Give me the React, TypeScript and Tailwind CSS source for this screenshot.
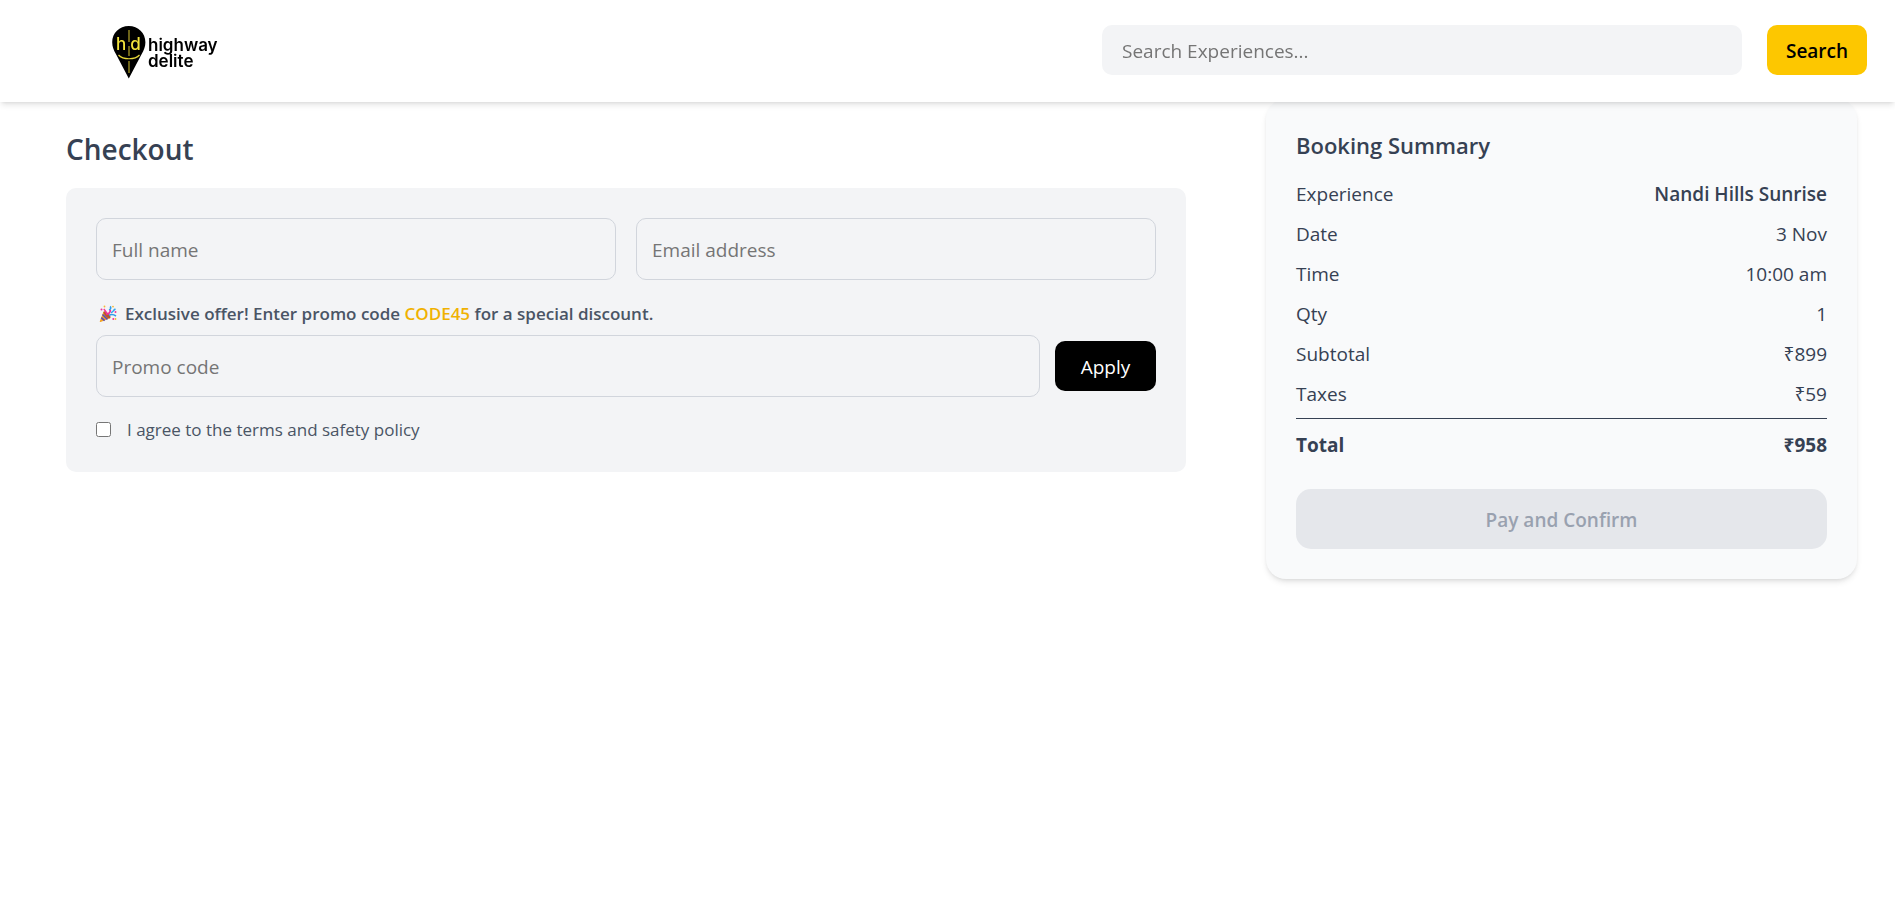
import { useState } from "react";

const rows = [
  { label: "Experience", value: "Nandi Hills Sunrise", strong: true },
  { label: "Date", value: "3 Nov" },
  { label: "Time", value: "10:00 am" },
  { label: "Qty", value: "1" },
  { label: "Subtotal", value: "₹899" },
  { label: "Taxes", value: "₹59" },
];

function Logo() {
  return (
    <a href="#" className="flex items-start gap-[2px] pt-1 text-black">
      <svg width="34" height="53" viewBox="0 0 34 53" aria-hidden="true">
        <path
          d="M16.8 0C7.4 0 .2 7.2.2 16.2c0 4.4 1.5 7.8 3.7 11.8L16.8 52.5 29.7 28c2.2-4 3.7-7.4 3.7-11.8C33.4 7.2 26.2 0 16.8 0Z"
          fill="#000"
        />
        <path d="M17 4V16M17 20V30M17 35V47" stroke="#b5a52a" strokeWidth="1.2" fill="none" />
        <path d="M6.5 29C11 34 23 34 27.5 29" stroke="#e5d638" strokeWidth="1.2" fill="none" />
        <text x="4" y="24" fill="#f2e33c" fontFamily="Inter, sans-serif" fontSize="17" fontWeight="500">
          h<tspan dx="4">d</tspan>
        </text>
      </svg>
      <span className="block pt-[11px] font-['Inter',sans-serif] text-[17px] leading-4 font-semibold">
        highway
        <br />
        delite
      </span>
    </a>
  );
}

function PartyPopper() {
  return (
    <svg width="18" height="18" viewBox="0 0 18 18" className="shrink-0" aria-hidden="true">
      <path d="M4.5 6.5.8 16.2c-.2.7.3 1.1.9.8L11.5 13Z" fill="#f5a524" />
      <path d="M3.5 9.5 8.5 14.3M2.3 12.7 5.6 15.7" stroke="#5b4bb7" strokeWidth="1.7" />
      <ellipse cx="8" cy="9.8" rx="1.9" ry="4.5" transform="rotate(-45 8 9.8)" fill="#b8552c" />
      <path d="M11 1.5c1.500 1 .5 3-1 3.5M10 10.5c2-1.500 4.500-1.200 7 .5" stroke="#2f9be8" strokeWidth="1.6" fill="none" />
      <path d="M8.5 9.8C7 7.500 6.500 5.500 4.800 4M9 9c1.500-1 2.500-2.500 2.300-4" stroke="#f0319b" strokeWidth="1.6" fill="none" />
      <path d="M12 7.5c2 .2 2-2.5 4.5-3.5" stroke="#2fa5ec" strokeWidth="1.5" fill="none" />
      <g fill="#f0319b">
        <circle cx="2.5" cy="4.5" r="1" />
        <circle cx="16.5" cy="7" r="1" />
        <circle cx="14.3" cy="14" r="1" />
      </g>
      <g fill="#f7b731">
        <circle cx="5.5" cy="1.5" r=".9" />
        <circle cx="14" cy="1.6" r=".9" />
        <circle cx="16.5" cy="14" r=".9" />
      </g>
    </svg>
  );
}

const field =
  "h-[62px] w-full min-w-0 rounded-[10px] border border-gray-300 bg-transparent px-[15px] pt-[2px] text-[19px] text-gray-700 outline-none placeholder:text-[#757575]";

export default function App() {
  const [agreed, setAgreed] = useState(false);

  return (
    <div className="min-h-screen bg-white font-['Open_Sans','Noto_Sans',sans-serif] text-[19px] leading-[30px] text-gray-700">
      <header className="fixed inset-x-0 top-0 z-10 flex h-[102px] items-center justify-between bg-white pr-7 pb-[2px] pl-28 shadow-md">
        <Logo />
        <form className="flex w-[765px] items-center gap-[25px]" onSubmit={(e) => e.preventDefault()}>
          <input
            type="search"
            aria-label="Search Experiences"
            placeholder="Search Experiences..."
            className="h-[50px] min-w-0 flex-1 rounded-[10px] bg-gray-100 px-5 pt-[2px] outline-none placeholder:text-[#757575]"
          />
          <button className="h-[50px] w-[100px] rounded-[10px] bg-[#fdc700] pt-[2px] font-semibold text-black">
            Search
          </button>
        </form>
      </header>

      <main className="grid grid-cols-[1120fr_591fr] items-start gap-20 pt-[99px] pr-[38px] pl-[66px]">
        <section className="pt-[30px]">
          <h1 className="mb-[18px] text-[28px] leading-[41px] font-semibold">Checkout</h1>
          <form className="rounded-[10px] bg-gray-100 p-[30px]" onSubmit={(e) => e.preventDefault()}>
            <div className="grid grid-cols-2 gap-5">
              <input aria-label="Full name" placeholder="Full name" className={field} />
              <input type="email" aria-label="Email address" placeholder="Email address" className={field} />
            </div>
            <p className="mt-[21px] mb-[9px] flex h-[25px] items-center gap-2 pl-[3px] text-[17px] leading-[25px] font-semibold text-gray-600">
              <PartyPopper />
              <span>
                Exclusive offer! Enter promo code <span className="text-yellow-500">CODE45</span> for a special discount.
              </span>
            </p>
            <div className="flex items-center gap-[15px]">
              <input aria-label="Promo code" placeholder="Promo code" className={field} />
              <button className="h-[50px] w-[101px] shrink-0 rounded-[10px] bg-black pt-[2px] text-white">Apply</button>
            </div>
            <label className="mt-5 flex h-[25px] items-center gap-4 text-[17px] leading-[25px] text-gray-600">
              <input
                type="checkbox"
                checked={agreed}
                onChange={(e) => setAgreed(e.target.checked)}
                className="size-[15px]"
              />
              I agree to the terms and safety policy
            </label>
          </form>
        </section>

        <aside className="rounded-[20px] bg-gray-50 p-[30px] shadow-md">
          <h2 className="mb-[17px] text-[22px] leading-[33px] font-semibold">Booking Summary</h2>
          <dl>
            <div className="flex flex-col gap-[10px]">
              {rows.map((row) => (
                <div key={row.label} className="flex justify-between">
                  <dt>{row.label}</dt>
                  <dd className={row.strong ? "font-semibold" : ""}>{row.value}</dd>
                </div>
              ))}
            </div>
            <div className="mt-[9px] flex justify-between border-t border-gray-700 pt-[11px] font-bold">
              <dt>Total</dt>
              <dd>₹958</dd>
            </div>
          </dl>
          <button
            disabled={!agreed}
            className="mt-[29px] h-[60px] w-full rounded-[15px] bg-gray-200 pt-[2px] font-semibold text-gray-400"
          >
            Pay and Confirm
          </button>
        </aside>
      </main>
    </div>
  );
}
